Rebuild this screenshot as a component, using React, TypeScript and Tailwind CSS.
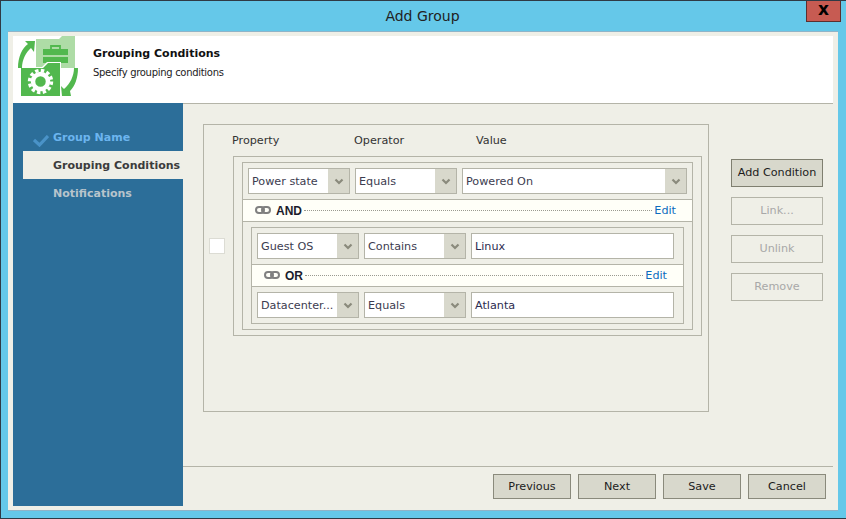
const FONT = "font-['DejaVu_Sans',sans-serif]";

function GroupIcon() {
  return (
    <svg viewBox="18 36 60 60" className="h-[60px] w-[60px]">
      <path d="M36 39 H59 L62 36 H75 V68 H36 Z" fill="#aedca6" />
      <path d="M43 49 H68 V55 H43 Z M43 57 H68 V63 H43 Z" fill="#52b84e" />
      <path d="M51 49 V46 H60 V49" fill="none" stroke="#52b84e" strokeWidth="1.8" />
      <path d="M20 67 H42 L47 62 H61 V97 H20 Z" fill="#fff" />
      <path d="M21 68 H43 L48 63 H60 V96 H21 Z" fill="#52b84e" />
      <circle cx="40.5" cy="81.5" r="7.5" fill="none" stroke="#fff" strokeWidth="4.5" />
      <circle cx="40.5" cy="81.5" r="11" fill="none" stroke="#fff" strokeWidth="3.4" strokeDasharray="3.4 2.36" />
      <path d="M18 68 C18 57 22 48 28 44 L25 41 H35 L34 52 L31 48 C26 52 22 60 22 68 Z" fill="#52b84e" />
      <path d="M78 68 C78 78 75 86 70 91 L71 96 H62 L61 86 L64 89 C70 84 74 76 74 68 Z" fill="#52b84e" />
    </svg>
  );
}

function Chevron() {
  return (
    <svg viewBox="0 0 10 7" className="h-[7px] w-[10px]">
      <path d="M1.5 1.5 L5 5 L8.5 1.5" fill="none" stroke="#8a8a7c" strokeWidth="2.2" />
    </svg>
  );
}

function LinkIcon() {
  return (
    <svg viewBox="0 0 16 8" className="mb-[1px] h-[8px] w-[16px]">
      <rect x="1" y="1" width="8" height="6" rx="3" fill="none" stroke="#808080" strokeWidth="2" />
      <rect x="7" y="1" width="8" height="6" rx="3" fill="none" stroke="#808080" strokeWidth="2" />
    </svg>
  );
}

function Select({ value, width = "w-[102px]" }: { value: string; width?: string }) {
  return (
    <div className={`flex h-[26px] ${width} items-stretch border border-[#b4b4a8] bg-white`}>
      <span className="flex-1 truncate pt-[1px] pl-[3px] text-[11.2px] leading-[24px] text-[#3c3c50]">{value}</span>
      <span className="flex w-[21px] items-center justify-center bg-[#d8d8cc]">
        <Chevron />
      </span>
    </div>
  );
}

function Input({ value, width }: { value: string; width: string }) {
  return (
    <div className={`h-[26px] ${width} border border-[#b4b4a8] bg-white pt-[1px] pl-[3px] text-[11.2px] leading-[24px] text-[#2c2c50]`}>
      {value}
    </div>
  );
}

function LogicRow({ label }: { label: string }) {
  return (
    <div className="flex h-[23px] items-center border-y border-[#b4b4a8] bg-[#fffff8] pr-[16px] pl-[12px]">
      <LinkIcon />
      <span className="ml-[5px] font-['Liberation_Sans',sans-serif] text-[12px] font-bold text-[#1c1c2c]">{label}</span>
      <span className="mx-[2px] flex-1 border-t border-dotted border-[#9a9a90]" />
      <span className="pt-[1px] text-[11.2px] text-[#0b6cbf]">Edit</span>
    </div>
  );
}

function SideButton({ label, active }: { label: string; active?: boolean }) {
  return (
    <div
      className={
        active
          ? "flex h-[28px] w-[92px] items-center justify-center border border-[#7f7f70] bg-[#d8d8cc] pt-[1px] text-[11.2px] text-[#1c1c1c]"
          : "flex h-[28px] w-[92px] items-center justify-center border border-[#b4b4a8] pt-[1px] text-[11.2px] text-[#a8a8a8]"
      }
    >
      {label}
    </div>
  );
}

function FooterButton({ label }: { label: string }) {
  return (
    <div className="flex h-[25px] w-[78px] items-center justify-center border border-[#8a8a7c] bg-[#d8d8cc] pt-[1px] text-[11.2px] text-[#1c1c1c]">
      {label}
    </div>
  );
}

export default function App() {
  return (
    <div className={`flex h-[519px] w-[846px] flex-col overflow-hidden border-t border-b border-l border-[#2f3a45] bg-[#65c8e9] ${FONT}`}>
      <div className="flex h-[30px] shrink-0 items-start">
        <div className="flex-1 pt-[6px] pl-[38px] text-center text-[14px] leading-[18px] text-[#222]">Add Group</div>
        <div className="mr-[5px] flex h-[21px] w-[35px] items-center justify-center border-x border-b border-[#5b2f2f] bg-[#c75b52] pb-[3px] text-[17px] leading-none font-bold text-black">
          x
        </div>
      </div>

      <div className="ml-[7px] flex h-[480px] w-[830px] flex-col border-y border-t-[#8fb4c8] border-b-[#8fb4c8] bg-[#efefe7] px-[5px] pt-[4px] pb-[4px]">
        <div className="flex h-[67px] shrink-0 bg-white pl-[5px]">
          <GroupIcon />
          <div className="ml-[15px] pt-[10px]">
            <div className="text-[11px] leading-[15px] font-bold text-[#111]">Grouping Conditions</div>
            <div className="mt-[5px] text-[10px] leading-[14px] tracking-[-0.3px] text-[#222]">Specify grouping conditions</div>
          </div>
        </div>

        <div className="flex flex-1">
          <div className="w-[170px] shrink-0 bg-[#2c6e99] pt-[20px] pl-[10px] text-[11px] font-bold whitespace-nowrap">
            <div className="relative flex h-[28px] items-center pt-[2px] pl-[30px] text-[#6cb5ef]">
              <svg viewBox="0 0 16 12" className="absolute top-[12px] left-[10px] h-[12px] w-[16px]">
                <path d="M1 5 L6.5 10 L15 1" fill="none" stroke="#4a93c8" strokeWidth="3.2" />
              </svg>
              Group Name
            </div>
            <div className="flex h-[28px] items-center bg-[#efefe7] pt-[2px] pl-[30px] text-[#3c3c3c]">Grouping Conditions</div>
            <div className="flex h-[28px] items-center pt-[2px] pl-[30px] text-[#b8c4cc]">Notifications</div>
          </div>

          <div className="flex flex-1 flex-col border-t border-[#b4b4a8]">
            <div className="flex h-[362px] items-start pt-[20px] pl-[20px]">
              <div className="flex h-[288px] w-[506px] flex-col border border-[#b4b4a8] pl-[5px]">
                <div className="flex h-[31px] shrink-0 items-center pt-[2px] pl-[23px] text-[11.2px] text-[#333]">
                  <span className="w-[122px]">Property</span>
                  <span className="w-[122px]">Operator</span>
                  <span>Value</span>
                </div>
                <div className="flex items-center gap-[8px]">
                  <div className="h-[16px] w-[16px] border border-[#dcdcd4] bg-white" />
                  <div className="h-[180px] w-[469px] border border-[#b4b4a8] px-[8px] py-[5px]">
                    <div className="h-[168px] w-[451px] border border-[#b4b4a8]">
                      <div className="flex gap-[5px] p-[5px]">
                        <Select value="Power state" />
                        <Select value="Equals" />
                        <Select value="Powered On" width="w-[225px]" />
                      </div>
                      <LogicRow label="AND" />
                      <div className="mx-[8px] mt-[5px] h-[97px] w-[433px] border border-[#b4b4a8]">
                        <div className="flex gap-[5px] p-[5px]">
                          <Select value="Guest OS" />
                          <Select value="Contains" />
                          <Input value="Linux" width="w-[203px]" />
                        </div>
                        <LogicRow label="OR" />
                        <div className="flex gap-[5px] p-[5px]">
                          <Select value="Datacenter..." />
                          <Select value="Equals" />
                          <Input value="Atlanta" width="w-[203px]" />
                        </div>
                      </div>
                    </div>
                  </div>
                </div>
              </div>
              <div className="mt-[35px] ml-[22px] flex flex-col gap-[10px]">
                <SideButton label="Add Condition" active />
                <SideButton label="Link..." />
                <SideButton label="Unlink" />
                <SideButton label="Remove" />
              </div>
            </div>
            <div className="flex flex-1 items-start justify-end gap-[7px] border-t border-[#b4b4a8] pt-[7px] pr-[7px]">
              <FooterButton label="Previous" />
              <FooterButton label="Next" />
              <FooterButton label="Save" />
              <FooterButton label="Cancel" />
            </div>
          </div>
        </div>
      </div>
    </div>
  );
}
